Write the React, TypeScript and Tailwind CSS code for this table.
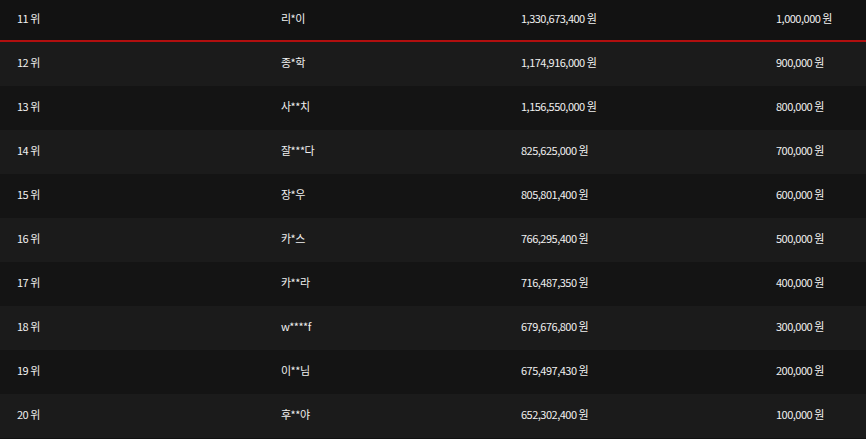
import React from "react";

const rows = [
  ["11 위", "리*이", "1,330,673,400 원", "1,000,000 원"],
  ["12 위", "종*학", "1,174,916,000 원", "900,000 원"],
  ["13 위", "사**치", "1,156,550,000 원", "800,000 원"],
  ["14 위", "잘***다", "825,625,000 원", "700,000 원"],
  ["15 위", "장*우", "805,801,400 원", "600,000 원"],
  ["16 위", "카*스", "766,295,400 원", "500,000 원"],
  ["17 위", "카**라", "716,487,350 원", "400,000 원"],
  ["18 위", "w****f", "679,676,800 원", "300,000 원"],
  ["19 위", "이**님", "675,497,430 원", "200,000 원"],
  ["20 위", "후**야", "652,302,400 원", "100,000 원"],
];

export default function App() {
  return (
    <div
      className="w-[866px] h-[439px] overflow-hidden bg-[#121212] text-[#f0f0f0] text-[11px]"
      style={{ fontFamily: '"Noto Sans CJK KR", "Noto Sans", sans-serif' }}
    >
      {rows.map((r, i) => {
        const first = i === 0;
        const bg = first ? "bg-[#121212]" : i % 2 === 1 ? "bg-[#1b1b1b]" : "bg-[#141414]";
        return (
          <div
            key={i}
            className={`grid grid-cols-[264px_240px_255px_1fr] items-center pb-[3px] ${bg} ${
              first ? "h-[42px] border-b-2 border-[#b10f0f]" : "h-[44px]"
            }`}
          >
            <div className="pl-[17px] tracking-[-0.5px]">{r[0]}</div>
            <div className="pl-[17px] tracking-[-0.5px]">{r[1]}</div>
            <div className="pl-[17px] tracking-[-0.5px]">{r[2]}</div>
            <div className="pl-[17px] tracking-[-0.5px]">{r[3]}</div>
          </div>
        );
      })}
    </div>
  );
}
